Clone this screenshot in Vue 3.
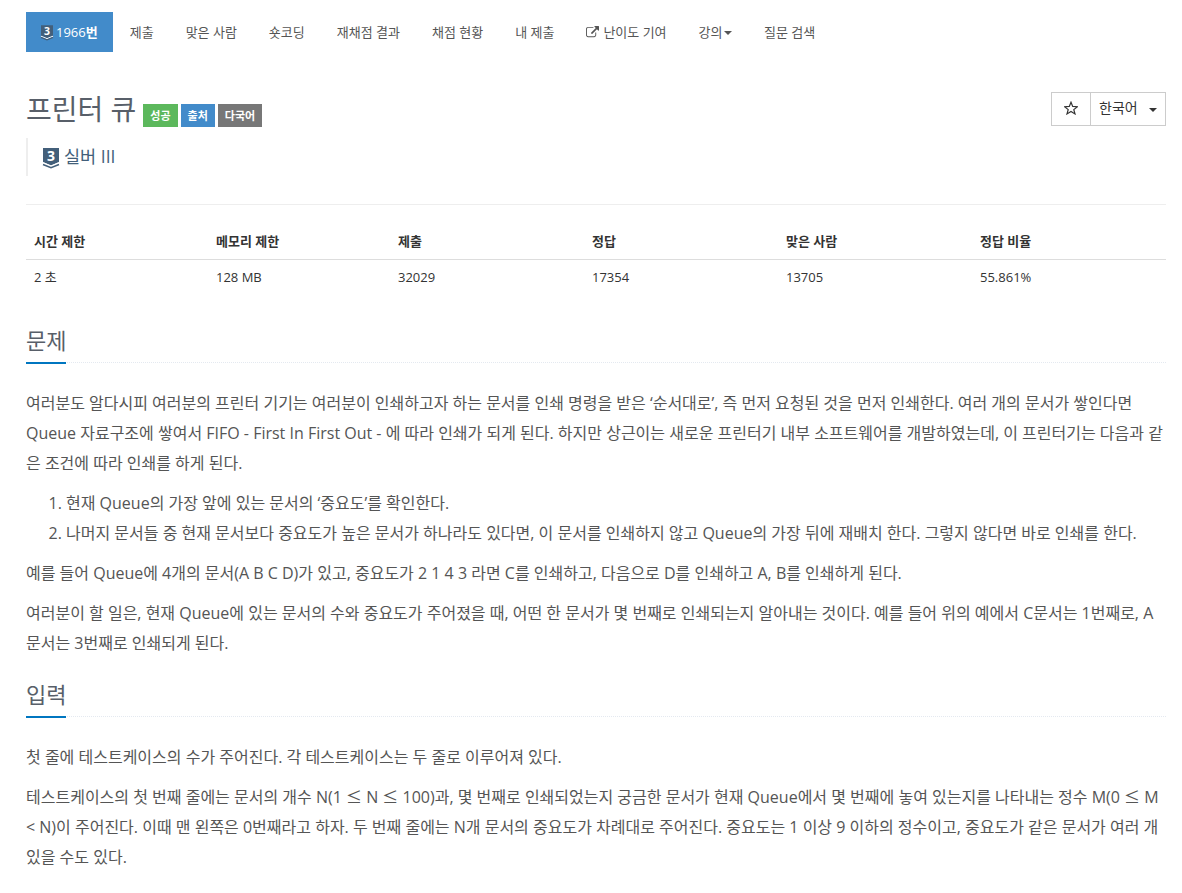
<script setup>
const tabs = [
  { label: '제출' },
  { label: '맞은 사람' },
  { label: '숏코딩' },
  { label: '재채점 결과' },
  { label: '채점 현황' },
  { label: '내 제출' },
  { label: '난이도 기여', external: true },
  { label: '강의', caret: true },
  { label: '질문 검색' },
]

const badges = [
  { label: '성공', type: 'success' },
  { label: '출처', type: 'primary' },
  { label: '다국어', type: 'default' },
]

const stats = [
  { label: '시간 제한', value: '2 초' },
  { label: '메모리 제한', value: '128 MB' },
  { label: '제출', value: '32029' },
  { label: '정답', value: '17354' },
  { label: '맞은 사람', value: '13705' },
  { label: '정답 비율', value: '55.861%' },
]
</script>

<template>
  <main class="page">
    <nav class="tabs">
      <a class="tab tab--active">
        <svg class="tab__tier" viewBox="0 0 16 21">
          <path fill="#435f7a" d="M0 0h16v14l-8 3.400-8-3.400z" />
          <path fill="none" stroke="#fff" stroke-width="1.400" d="M0 14.700l8 3.300 8-3.300" />
          <path fill="none" stroke="#435f7a" stroke-width="1.600" d="M0 16.400l8 3.300 8-3.300" />
          <text class="tier-number" x="8" y="13" text-anchor="middle">3</text>
        </svg>
        <span>1966<b>번</b></span>
      </a>
      <a v-for="tab in tabs" :key="tab.label" class="tab">
        <svg v-if="tab.external" class="tab__external" viewBox="0 0 1792 1792">
          <path
            fill="currentColor"
            d="M1408 928v320q0 119-84.500 203.500t-203.500 84.500h-832q-119 0-203.500-84.500t-84.500-203.500v-832q0-119 84.500-203.500t203.500-84.500h704q14 0 23 9t9 23v64q0 14-9 23t-23 9h-704q-66 0-113 47t-47 113v832q0 66 47 113t113 47h832q66 0 113-47t47-113v-320q0-14 9-23t23-9h64q14 0 23 9t9 23zM1792 64v512q0 26-19 45t-45 19-45-19l-176-176-652 652q-10 10-23 10t-23-10l-114-114q-10-10-10-23t10-23l652-652-176-176q-19-19-19-45t19-45 45-19h512q26 0 45 19t19 45z"
          />
        </svg>
        <span>{{ tab.label }}</span>
        <span v-if="tab.caret" class="caret"></span>
      </a>
    </nav>

    <header class="heading">
      <div class="heading__row">
        <h1 class="heading__title">프린터 큐</h1>
        <span v-for="badge in badges" :key="badge.label" class="badge" :class="`badge--${badge.type}`">{{ badge.label }}</span>
        <div class="toolbar">
          <button class="toolbar__button toolbar__button--star">
            <svg class="star" viewBox="0 0 14 14">
              <path
                fill="none"
                stroke="#333"
                stroke-width="1.200"
                d="M7 1.200l1.700 4.200 4.700.3-3.600 2.900 1.200 4.300L7 10.500 3 12.900l1.200-4.300L.6 5.700l4.700-.3z"
              />
            </svg>
          </button>
          <button class="toolbar__button">한국어<span class="caret"></span></button>
        </div>
      </div>
      <blockquote class="tier">
        <svg class="tier__icon" viewBox="0 0 16 21">
          <path fill="#435f7a" d="M0 0h16v14l-8 3.400-8-3.400z" />
          <path fill="none" stroke="#fff" stroke-width="1.200" d="M0 14.700l8 3.300 8-3.300" />
          <path fill="none" stroke="#435f7a" stroke-width="1.600" d="M0 16.400l8 3.300 8-3.300" />
          <text class="tier-number" x="8" y="13" text-anchor="middle">3</text>
        </svg>
        <span>실버 III</span>
      </blockquote>
    </header>

    <table class="stats">
      <thead>
        <tr>
          <th v-for="stat in stats" :key="stat.label">{{ stat.label }}</th>
        </tr>
      </thead>
      <tbody>
        <tr>
          <td v-for="stat in stats" :key="stat.label">{{ stat.value }}</td>
        </tr>
      </tbody>
    </table>

    <section class="section">
      <div class="headline"><h2>문제</h2></div>
      <div class="section__body">
        <p>
          여러분도 알다시피 여러분의 프린터 기기는 여러분이 인쇄하고자 하는 문서를 인쇄 명령을 받은 ‘순서대로’, 즉 먼저 요청된 것을 먼저 인쇄한다. 여러 개의 문서가 쌓인다면 Queue 자료구조에 쌓여서 FIFO - First In First Out - 에 따라 인쇄가 되게 된다. 하지만 상근이는 새로운 프린터기 내부 소프트웨어를 개발하였는데, 이 프린터기는 다음과 같은 조건에 따라 인쇄를 하게 된다.
        </p>
        <ol>
          <li>현재 Queue의 가장 앞에 있는 문서의 ‘중요도’를 확인한다.</li>
          <li>나머지 문서들 중 현재 문서보다 중요도가 높은 문서가 하나라도 있다면, 이 문서를 인쇄하지 않고 Queue의 가장 뒤에 재배치 한다. 그렇지 않다면 바로 인쇄를 한다.</li>
        </ol>
        <p>예를 들어 Queue에 4개의 문서(A B C D)가 있고, 중요도가 2 1 4 3 라면 C를 인쇄하고, 다음으로 D를 인쇄하고 A, B를 인쇄하게 된다.</p>
        <p>
          여러분이 할 일은, 현재 Queue에 있는 문서의 수와 중요도가 주어졌을 때, 어떤 한 문서가 몇 번째로 인쇄되는지 알아내는 것이다. 예를 들어 위의 예에서 C문서는 1번째로, A문서는 3번째로 인쇄되게 된다.
        </p>
      </div>
    </section>

    <section class="section">
      <div class="headline"><h2>입력</h2></div>
      <div class="section__body">
        <p>첫 줄에 테스트케이스의 수가 주어진다. 각 테스트케이스는 두 줄로 이루어져 있다.</p>
        <p>
          테스트케이스의 첫 번째 줄에는 문서의 개수 N(1 <span class="math">≤</span> N <span class="math">≤</span> 100)과, 몇 번째로 인쇄되었는지 궁금한 문서가 현재 Queue에서 몇 번째에 놓여 있는지를 나타내는 정수 M(0 <span class="math">≤</span> M &lt; N)이 주어진다. 이때 맨 왼쪽은 0번째라고 하자. 두 번째 줄에는 N개 문서의 중요도가 차례대로 주어진다. 중요도는 1 이상 9 이하의 정수이고, 중요도가 같은 문서가 여러 개 있을 수도 있다.
        </p>
      </div>
    </section>
  </main>
</template>

<style>
body {
  background: #fff;
}
</style>

<style scoped>
.page {
  box-sizing: border-box;
  height: 893px;
  overflow: hidden;
  padding: 12px 16px 0 26px;
  font-family: 'Open Sans', 'Noto Sans CJK KR', sans-serif;
  font-size: 13px;
  line-height: 20px;
  color: #333;
}

.tabs {
  display: flex;
  gap: 2px;
}

.tab {
  display: flex;
  align-items: center;
  box-sizing: border-box;
  height: 40px;
  padding: 0 15px 1px;
  color: #555;
  white-space: nowrap;
}

.tab--active {
  background: #428bca;
  color: #fff;
}

.tab__tier {
  width: 12px;
  height: 16px;
  margin: 3px 3px 0 0;
  overflow: visible;
}

.tab__external {
  width: 13px;
  height: 13px;
  margin: 1px 4px 0 0;
}

.tier-number {
  font: bold 14px 'Open Sans', sans-serif;
  fill: #fff;
}

.caret {
  width: 0;
  border-top: 4px solid;
  border-right: 4px solid transparent;
  border-left: 4px solid transparent;
  margin: 3px 0 0 1.5px;
}

.heading {
  height: 152px;
  border-bottom: 1px solid #eee;
}

.heading__row {
  display: flex;
  gap: 3px;
  padding-top: 40px;
}

.heading__title {
  margin: 0 4px 0 0;
  font-size: 28px;
  font-weight: 400;
  line-height: 34px;
  color: #585f69;
}

.badge {
  height: 23px;
  margin-top: 12px;
  padding: 0 7px;
  font-size: 11px;
  font-weight: 700;
  line-height: 24px;
  color: #fff;
}

.badge--success {
  background: #5cb85c;
}

.badge--primary {
  background: #428bca;
}

.badge--default {
  background: #777;
}

.toolbar {
  display: flex;
  margin-left: auto;
}

.toolbar__button {
  display: flex;
  align-items: center;
  justify-content: space-between;
  box-sizing: border-box;
  width: 76px;
  height: 34px;
  padding: 0 8px 2px;
  border: 1px solid #ccc;
  background: #fff;
  font: inherit;
  font-size: 14px;
  color: #333;
}

.toolbar__button--star {
  justify-content: center;
  width: 40px;
  margin-right: -1px;
  padding-right: 9px;
}

.star {
  width: 14px;
  height: 14px;
}

.tier {
  display: flex;
  align-items: center;
  box-sizing: border-box;
  height: 38px;
  margin: 11px 0 0;
  padding: 0 0 2px 15px;
  border-left: 2px solid #eee;
  font-size: 17.5px;
  color: #435f7a;
}

.tier__icon {
  width: 16px;
  height: 21px;
  margin: 4px 5px 0 0;
  overflow: visible;
}

.stats {
  width: 1140px;
  margin-top: 19px;
  border-collapse: collapse;
  table-layout: fixed;
}

.stats th,
.stats td {
  box-sizing: border-box;
  padding: 8px;
  line-height: 18px;
  text-align: left;
}

.stats th {
  width: 194px;
  padding-bottom: 9px;
  border-bottom: 1px solid #ddd;
}

.stats th:nth-child(-n + 2) {
  width: 182px;
}

.stats th:last-child {
  width: auto;
}

.section {
  margin-bottom: 20px;
}

.stats + .section {
  margin-top: 30px;
}

.headline {
  height: 38px;
  margin-bottom: 25px;
  border-bottom: 1px dotted #e4e9f0;
}

.headline h2 {
  display: inline-block;
  box-sizing: border-box;
  height: 40px;
  margin: 0;
  border-bottom: 2px solid #0076c0;
  font-size: 22px;
  font-weight: 400;
  line-height: 32px;
  color: #585f69;
}

.section__body {
  font-size: 16px;
  line-height: 30px;
  color: #555;
}

.section__body p,
.section__body ol {
  margin: 0 0 10px;
}

.section__body ol {
  padding-left: 40px;
}

.math {
  font-family: 'Noto Sans CJK KR', sans-serif;
  line-height: 1;
}
</style>
